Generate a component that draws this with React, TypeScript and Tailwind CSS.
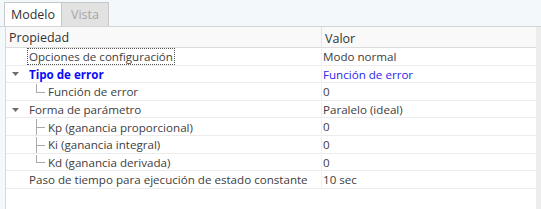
import React from "react";

type Row = {
  label: string;
  value: string;
  level: 0 | 1;
  arrow?: boolean;
  blue?: boolean;
  focus?: boolean;
  tree?: "mid" | "last";
};

const ROWS: Row[] = [
  { label: "Opciones de configuración", value: "Modo normal", level: 0, focus: true },
  { label: "Tipo de error", value: "Función de error", level: 0, arrow: true, blue: true },
  { label: "Función de error", value: "0", level: 1, tree: "last" },
  { label: "Forma de parámetro", value: "Paralelo (ideal)", level: 0, arrow: true },
  { label: "Kp (ganancia proporcional)", value: "0", level: 1, tree: "mid" },
  { label: "Ki (ganancia integral)", value: "0", level: 1, tree: "mid" },
  { label: "Kd (ganancia derivada)", value: "0", level: 1, tree: "last" },
  { label: "Paso de tiempo para ejecución de estado constante", value: "10 sec", level: 0 },
];

function Tree({ kind }: { kind: "mid" | "last" }) {
  return (
    <span className="relative h-full w-[10px] shrink-0">
      <span
        className={`absolute left-0 top-0 w-px bg-[#aaaaaa] ${kind === "mid" ? "h-full" : "h-1/2"}`}
      />
      <span className="absolute left-0 top-1/2 h-px w-[9px] bg-[#aaaaaa]" />
    </span>
  );
}

export default function App() {
  return (
    <div
      className="h-[209px] w-[541px] overflow-hidden bg-[#f3f8fa] text-[11.6px] text-[#404040]"
      style={{ fontFamily: '"Open Sans", "Noto Sans", sans-serif' }}
    >
      <div className="flex h-[27px] items-end border-b border-[#d4d4d4] pl-[4px]">
        <div className="flex h-[24px] w-[58px] items-center justify-center border border-b-0 border-[#c8c8c8] bg-white pt-[1px] text-[12.5px] text-[#333]">
          Modelo
        </div>
        <div className="flex h-[24px] w-[47px] items-center justify-center border border-b-0 border-l-0 border-[#c8c8c8] bg-[#e2e2e2] pt-[1px] text-[12.5px] text-[#a6a6a6]">
          Vista
        </div>
      </div>

      <div className="ml-[5px] flex h-[182px] border-l border-[#d8d8d8] bg-white">
        <div className="w-[531px]">
          <div className="flex h-[21px] items-center border-b border-[#dcdcdc] bg-[#f9f9f9] text-[12.5px] text-[#333]">
            <div className="w-[315px] pl-[3px] pt-[2px]">Propiedad</div>
            <div className="h-full border-l border-[#e4e4e4] pl-[3px] pt-[2px] leading-[19px]">Valor</div>
          </div>
          {ROWS.map((r) => (
            <div key={r.label} className="flex h-[17.6px] items-center border-b border-[#ececec] pt-[1px]">
              <div className="flex h-full w-[315px] items-center">
                <span className="flex w-[21px] shrink-0 items-center pl-[6px]">
                  {r.arrow && (
                    <svg width="7" height="4" viewBox="0 0 7 4">
                      <path d="M0 0H7L3.5 4Z" fill="#6e6e6e" />
                    </svg>
                  )}
                </span>
                {r.level === 1 && (
                  <>
                    <span className="w-[9px] shrink-0" />
                    {r.tree && <Tree kind={r.tree} />}
                  </>
                )}
                <span
                  className={`whitespace-nowrap leading-[15px] ${
                    r.focus ? "border border-dotted border-[#555] px-[1px]" : "px-[2px]"
                  } ${r.blue ? "font-bold text-[#0a0aff]" : ""}`}
                >
                  {r.label}
                </span>
              </div>
              <div
                className={`flex h-full items-center border-l border-[#f0f0f0] pl-[1px] ${
                  r.blue ? "text-[#2828f0]" : ""
                }`}
              >
                {r.value}
              </div>
            </div>
          ))}
        </div>
        <div className="h-full w-[5px] bg-[#ededed]" />
      </div>
    </div>
  );
}
